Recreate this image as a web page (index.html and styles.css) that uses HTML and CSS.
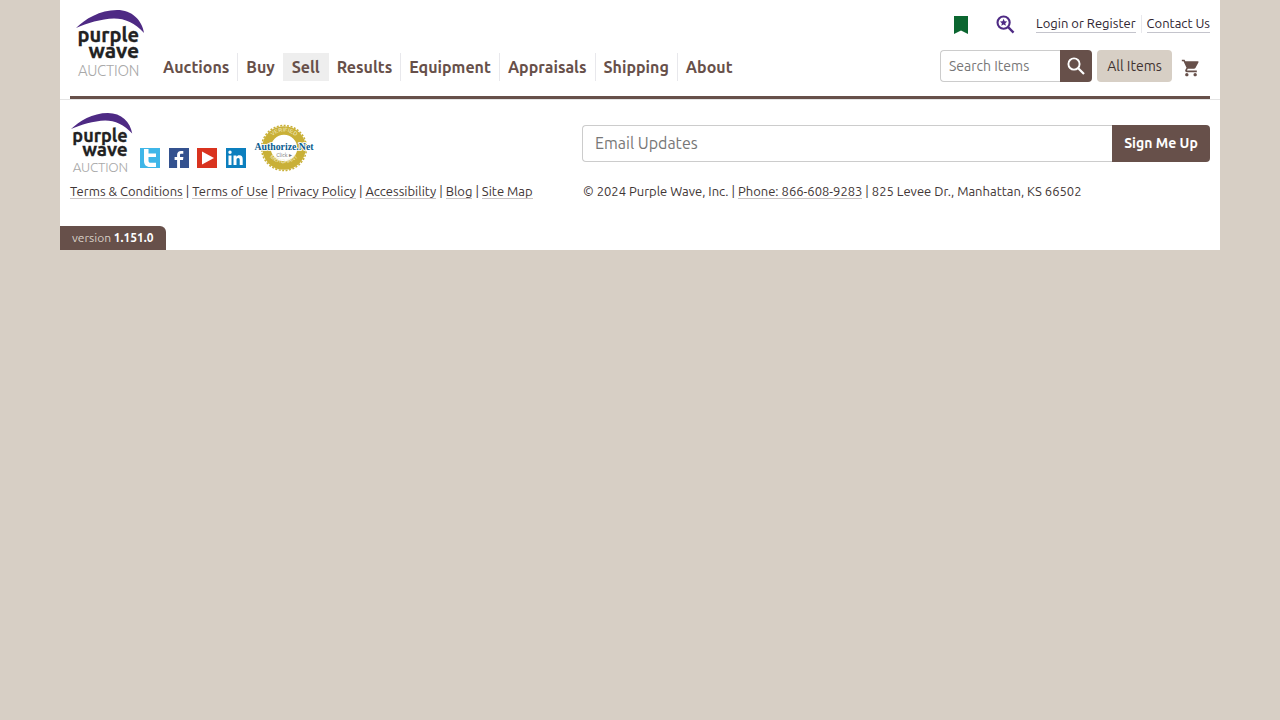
FILE: index.html
```html
<!DOCTYPE html>
<html lang="en">
<head>
<meta charset="utf-8">
<title>Purple Wave Auction</title>
<link rel="stylesheet" href="styles.css">
</head>
<body>
<div class="page">
  <header class="header">
    <a class="logo" href="#">
      <svg class="logo-svg" viewBox="0 0 72 70" width="72" height="70">
        <path d="M1 19C10 10 25 1 42 1C57 1 67 11 69 24C60 14 50 9.500 39 9.500C26 10 12 14 1 19Z" fill="#4e2a84"/>
        <text class="logo-word logo-purple" x="64" y="33" text-anchor="end">purple</text>
        <text class="logo-word" x="64" y="49" text-anchor="end">wave</text>
        <text class="logo-sub" x="64" y="67" text-anchor="end">AUCTION</text>
      </svg>
    </a>
    <nav class="nav">
      <a class="nav-item sep" href="#">Auctions</a>
      <a class="nav-item" href="#">Buy</a>
      <a class="nav-item active" href="#">Sell</a>
      <a class="nav-item sep" href="#">Results</a>
      <a class="nav-item sep" href="#">Equipment</a>
      <a class="nav-item sep" href="#">Appraisals</a>
      <a class="nav-item sep" href="#">Shipping</a>
      <a class="nav-item" href="#">About</a>
    </nav>
    <div class="tools">
      <div class="tools-top">
        <svg class="bookmark" viewBox="0 0 14 18" width="14" height="18"><path d="M0 0H14V18L7 14.500L0 18Z" fill="#0b6630"/></svg>
        <svg class="saved" viewBox="0 0 20 20" width="19" height="19">
          <circle cx="8" cy="8" r="6.400" fill="none" stroke="#4e2a84" stroke-width="2.200"/>
          <path d="M12.500 12.500L18.500 18.500" stroke="#4e2a84" stroke-width="2.400" fill="none"/>
          <path d="M8 4l1.100 2.600 2.700.2-2 1.800.6 2.700L8 9.900l-2.400 1.400.6-2.700-2-1.800 2.700-.2z" fill="#4e2a84"/>
        </svg>
        <a class="top-link" href="#">Login or Register</a>
        <span class="top-sep"></span>
        <a class="top-link" href="#">Contact Us</a>
      </div>
      <div class="tools-bottom">
        <form class="search">
          <input class="search-input" type="text" placeholder="Search Items">
          <button class="search-btn" type="button" aria-label="Search">
            <svg viewBox="0 0 20 20" width="20" height="20"><circle cx="8" cy="8" r="5.600" fill="none" stroke="#fff" stroke-width="1.900"/><path d="M12 12L18 18" stroke="#fff" stroke-width="2.200"/></svg>
          </button>
        </form>
        <a class="all-items" href="#">All Items</a>
        <svg class="cart" viewBox="0 0 24 24" width="20" height="20"><path fill="#67504a" d="M7 18c-1.100 0-1.990.9-1.990 2S5.900 22 7 22s2-.9 2-2-.9-2-2-2zM1 2v2h2l3.600 7.590-1.350 2.450c-.16.28-.25.61-.25.96 0 1.100.9 2 2 2h12v-2H7.420c-.14 0-.25-.11-.25-.25l.03-.12.9-1.630h7.450c.75 0 1.410-.41 1.750-1.030l3.580-6.490A1 1 0 0 0 20 4H5.210l-.94-2H1zm16 16c-1.100 0-1.990.9-1.990 2s.89 2 1.990 2 2-.9 2-2-.9-2-2-2z"/></svg>
      </div>
    </div>
  </header>
  <div class="rule"></div>
  <footer class="footer">
    <div class="footer-left">
      <div class="brand-row">
        <svg class="logo-small" viewBox="0 0 72 70" width="65" height="63">
          <path d="M1 19C10 10 25 1 42 1C57 1 67 11 69 24C60 14 50 9.500 39 9.500C26 10 12 14 1 19Z" fill="#4e2a84"/>
          <text class="logo-word logo-purple" x="64" y="33" text-anchor="end">purple</text>
          <text class="logo-word" x="64" y="49" text-anchor="end">wave</text>
          <text class="logo-sub" x="64" y="67" text-anchor="end">AUCTION</text>
        </svg>
        <a class="social" href="#" aria-label="Twitter"><svg viewBox="0 0 20 20" width="20" height="20"><rect width="20" height="20" fill="#3fb6e8"/><path d="M4 1h4.500v4.500H16v3.500H8.500v3.500c0 1.500.7 2.300 2.200 2.300H16V19h-6c-3.800 0-6-2.300-6-6z" fill="#fff"/></svg></a>
        <a class="social" href="#" aria-label="Facebook"><svg viewBox="0 0 20 20" width="20" height="20"><rect width="20" height="20" fill="#34528f"/><path d="M11 20v-8h3l.4-3H11V7.200c0-.9.300-1.400 1.500-1.400h1.800V3.100c-.4 0-1.300-.1-2.300-.1-2.400 0-3.900 1.400-3.900 3.900V9H5.600v3h2.500v8z" fill="#fff"/></svg></a>
        <a class="social" href="#" aria-label="YouTube"><svg viewBox="0 0 20 20" width="20" height="20"><rect width="20" height="20" fill="#d9331f"/><path d="M5 3.500L17 10L5 16.500Z" fill="#fff"/></svg></a>
        <a class="social" href="#" aria-label="LinkedIn"><svg viewBox="0 0 20 20" width="20" height="20"><rect width="20" height="20" fill="#0c7fbe"/><path d="M2.500 7.500h3V17h-3zM2.300 4.300a1.700 1.700 0 1 1 3.400 0 1.700 1.700 0 0 1-3.400 0zM7.500 7.500h2.900v1.300c.5-.9 1.500-1.500 2.900-1.500 2.500 0 3.400 1.500 3.400 4V17h-3v-5c0-1.200-.4-2-1.500-2-1.200 0-1.700.9-1.700 2v5h-3z" fill="#fff"/></svg></a>
        <svg class="seal" viewBox="0 0 60 50" width="60" height="50">
          <defs>
            <path id="seal-top" d="M13.500 25a16 16 0 0 1 33 0"/>
            <path id="seal-bottom" d="M11 25a19.500 19.500 0 0 0 38 0"/>
          </defs>
          <circle cx="30" cy="25" r="22.500" fill="none" stroke="#c9b037" stroke-width="1.500" stroke-dasharray="2 1.500"/>
          <circle cx="30" cy="25" r="17.500" fill="none" stroke="#c9b037" stroke-width="8.500"/>
          <text class="seal-ring"><textPath href="#seal-top" startOffset="50%" text-anchor="middle">VERIFIED</textPath></text>
          <text class="seal-ring"><textPath href="#seal-bottom" startOffset="50%" text-anchor="middle">MERCHANT</textPath></text>
          <text class="seal-name" x="30" y="27" text-anchor="middle">Authorize.Net</text>
          <text class="seal-click" x="30" y="34" text-anchor="middle">Click ▸</text>
        </svg>
      </div>
      <p class="legal">
        <a href="#">Terms &amp; Conditions</a> | <a href="#">Terms of Use</a> | <a href="#">Privacy Policy</a> | <a href="#">Accessibility</a> | <a href="#">Blog</a> | <a href="#">Site Map</a>
      </p>
    </div>
    <div class="footer-right">
      <form class="signup">
        <input class="signup-input" type="text" placeholder="Email Updates">
        <button class="signup-btn" type="button">Sign Me Up</button>
      </form>
      <p class="legal company">© 2024 Purple Wave, Inc. | <a href="#">Phone: 866-608-9283</a> | 825 Levee Dr., Manhattan, KS 66502</p>
    </div>
  </footer>
  <div class="version">version <b>1.151.0</b></div>
</div>
</body>
</html>
```
FILE: styles.css
```css
* { box-sizing: border-box; }
html, body { margin: 0; padding: 0; }
body {
  background: #d7cfc5;
  font-family: Ubuntu, "Noto Sans", "Open Sans", sans-serif;
  color: #3f3636;
  min-height: 720px;
}
a { color: inherit; text-decoration: none; }
.page {
  width: 1160px;
  height: 250px;
  margin: 0 auto;
  background: #fff;
  display: flex;
  flex-direction: column;
}
.header {
  height: 96px;
  margin: 0 10px;
  display: flex;
  align-items: flex-start;
}
.logo { display: block; margin: 9px 0 0 5px; width: 80px; height: 70px; }
.logo-svg, .logo-small { display: block; overflow: visible; }
.logo-word { font-size: 21px; font-weight: 700; fill: #222; stroke: #222; stroke-width: 0.3px; }
.logo-purple { font-size: 20px; }
.logo-sub { font-size: 15px; font-weight: 300; fill: #a9a9a9; letter-spacing: -0.3px; }
.nav { display: flex; margin-top: 53px; height: 28px; }
.nav-item {
  font-size: 16px;
  font-weight: 700;
  line-height: 28px;
  color: #67504a;
  padding: 0 8px;
  border-right: 1px solid transparent;
}
.nav-item.sep { border-right-color: #e8e8ec; }
.nav-item.active { background: #eee; margin-left: -1px; padding-left: 9px; }
.tools { margin-left: auto; display: flex; flex-direction: column; align-items: flex-end; }
.tools-top { display: flex; align-items: center; height: 19px; margin-top: 14px; }
.bookmark { margin-right: 28px; margin-top: 2px; }
.saved { margin-right: 21px; margin-top: 2px; }
.top-link {
  font-size: 13px;
  line-height: 17px;
  color: #2e2430;
  border-bottom: 1px solid #c4c4cc;
}
.top-sep { width: 1px; height: 18px; background: #e8e8ec; margin: 0 5px; }
.tools-bottom { display: flex; align-items: center; margin-top: 17px; height: 32px; }
.search { display: flex; margin: 0; }
.search-input {
  width: 120px;
  height: 32px;
  border: 1px solid #ccc;
  border-right: 0;
  border-radius: 4px 0 0 4px;
  padding: 0 8px;
  font: 14px Ubuntu, "Noto Sans", sans-serif;
  outline: 0;
}
.search-input::placeholder, .signup-input::placeholder { color: #777; opacity: 1; }
.search-btn {
  width: 32px;
  height: 32px;
  padding: 0;
  border: 0;
  border-radius: 0 4px 4px 0;
  background: #67504a;
  display: flex;
  align-items: center;
  justify-content: center;
}
.all-items {
  margin-left: 5px;
  width: 75px;
  height: 32px;
  line-height: 32px;
  text-align: center;
  font-size: 14px;
  background: #d7cfc5;
  border-radius: 4px;
  color: #3f3230;
}
.cart { margin: 3px 9px 0 9px; }
.rule { height: 3px; margin: 0 10px; background: #67504a; }
.footer {
  flex: 1;
  border-top: 1px solid #e4e4e4;
  display: flex;
  padding: 11px 10px 0;
  justify-content: space-between;
}
.footer-left { width: 480px; }
.brand-row { display: flex; align-items: flex-end; height: 62px; }
.logo-small { margin: 1px 5px 0 0; align-self: flex-start; flex: none; }
.social { display: block; margin-right: 8.500px; line-height: 0; margin-bottom: 5px; }
.seal-name {
  font-size: 9.800px;
  font-weight: 700;
  fill: #0a5d8f;
  font-family: "Liberation Serif", serif;
  stroke: #fff;
  stroke-width: 1.500px;
  paint-order: stroke;
}
.seal-click { font-size: 5.500px; fill: #777; }
.seal-ring { font-size: 5.500px; fill: #f4eecb; font-family: "Liberation Sans", sans-serif; }
.legal { margin: 10px 0 0; font-size: 13px; line-height: 17px; color: #3f3636; white-space: nowrap; }
.legal a { border-bottom: 1px solid #c9c4c4; }
.footer-right { width: 628px; }
.signup { display: flex; margin: 14px 0 0; }
.signup-input {
  flex: 1;
  min-width: 0;
  height: 37px;
  border: 1px solid #ccc;
  border-right: 0;
  border-radius: 4px 0 0 4px;
  padding: 0 12px 2px;
  font: 16px Ubuntu, "Noto Sans", sans-serif;
  outline: 0;
}
.signup-btn {
  width: 98px;
  height: 37px;
  border: 0;
  border-radius: 0 4px 4px 0;
  background: #67504a;
  color: #fff;
  font: 700 14px Ubuntu, "Noto Sans", sans-serif;
  padding: 0 0 2px;
}
.company { margin: 21px 0 0 1px; }
.version {
  width: 106px;
  height: 24px;
  margin-top: -24px;
  position: relative;
  background: #67504a;
  border-radius: 0 6px 0 0;
  color: #d7cfc5;
  font-size: 12px;
  line-height: 24px;
  padding-left: 12px;
}
.version b { color: #fff; }
```
